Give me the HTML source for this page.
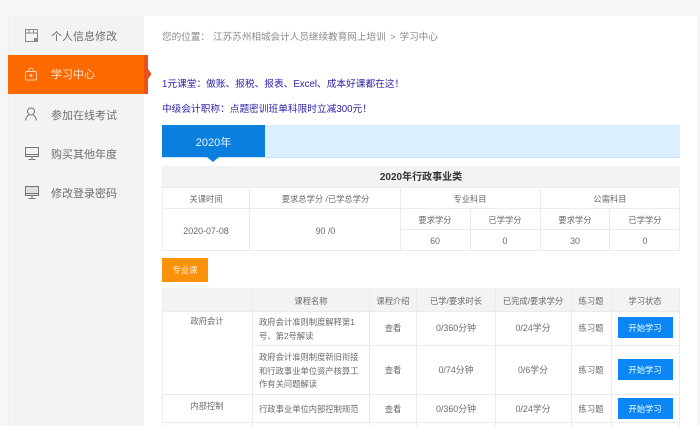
<!DOCTYPE html>
<html lang="zh"><head><meta charset="utf-8"><style>
html,body{margin:0;padding:0}
body{width:700px;height:426px;overflow:hidden;position:relative;background:#f6f6f6;font-family:"Liberation Sans","Noto Sans CJK SC",sans-serif;color:#666}
#w{left:0;top:0;width:700px;height:426px;overflow:hidden;filter:blur(.3px)}
div,svg{position:absolute}
.t{white-space:nowrap;font-size:8.3px;line-height:14px;color:#6a6a6a;text-align:center;transform:translateX(-50%)}
.n{font-size:8.9px}
.l{white-space:nowrap;line-height:14px;color:#666}
.m{font-size:11px;left:51px;color:#6e6e6e}
.hl{background:#ececec}
.btn{left:617.5px;width:55px;height:21px;background:#0a86f5;color:#fff;font-size:8.3px;line-height:22px;text-align:center}
</style></head><body><div id="w">
<div style="left:8px;top:16px;width:136px;height:410px;background:#f3f3f3;border-left:1px solid #eeeeee;box-sizing:border-box"></div>
<div style="left:144px;top:16px;width:553px;height:410px;background:#fff"></div>

<div style="left:8px;top:55px;width:136px;height:39px;background:#ff6a00"></div>
<div style="left:144px;top:55px;width:4px;height:39px;background:#e8501c"></div>
<svg style="left:148px;top:69px" width="4" height="10"><path d="M0 0L3.500 5L0 10Z" fill="#e8501c"/></svg>

<svg style="left:24px;top:27px" width="16" height="16" fill="none" stroke="#8a8a8a"><rect x="1.500" y="2.500" width="12" height="12"/><path d="M1.500 6h12M5 2.500v3.500M9.500 2.500v3.500"/><rect x="10.500" y="11.500" width="2" height="2" fill="#8a8a8a"/></svg>
<svg style="left:24px;top:66px" width="16" height="16" fill="none" stroke="#ffd0a8"><rect x="1.500" y="5.500" width="11" height="8.500" rx="1"/><path d="M4.500 5.500C4.500 1 9.500 1 9.500 5.500"/><circle cx="7" cy="9.500" r="1" fill="#ffd0a8"/></svg>
<svg style="left:24px;top:107px" width="16" height="16" fill="none" stroke="#777"><circle cx="7" cy="4.500" r="3.500"/><path d="M1.500 13.500C2 10.500 3.500 8.500 5 8M12.500 13.500C12 10.500 10.500 8.500 9 8"/></svg>
<svg style="left:24px;top:146px" width="16" height="16" fill="none" stroke="#777"><rect x="1.500" y="1.500" width="13" height="9"/><path d="M1.500 8.500h13M8 10.500v3M4.500 13.500h7"/></svg>
<svg style="left:24px;top:185px" width="16" height="16" fill="none" stroke="#777"><rect x="1.500" y="1.500" width="13" height="9" fill="#ddd"/><path d="M1.500 8.500h13M8 10.500v3M4.500 13.500h7"/></svg>

<div class="l m" style="top:30px">个人信息修改</div>
<div class="l m" style="top:68px;color:#ffe6cf">学习中心</div>
<div class="l m" style="top:109px">参加在线考试</div>
<div class="l m" style="top:148px">购买其他年度</div>
<div class="l m" style="top:187px">修改登录密码</div>

<div class="l" style="left:162px;top:31px;font-size:9.600px;color:#8a8a8a">您的位置：</div>
<div class="l" style="left:213px;top:31px;font-size:9.600px;color:#8a8a8a">江苏苏州相城会计人员继续教育网上培训</div>
<div class="l" style="left:390px;top:31px;font-size:9.600px;color:#8a8a8a">&gt;</div>
<div class="l" style="left:399.500px;top:31px;font-size:9.600px;color:#8a8a8a">学习中心</div>
<div class="l" style="left:162px;top:77.500px;font-size:9.700px;color:#2b1fa8">1元课堂：做账、报税、报表、Excel、成本好课都在这！</div>
<div class="l" style="left:162px;top:102.500px;font-size:9.700px;color:#2b1fa8">中级会计职称：点题密训班单科限时立减300元！</div>

<div style="left:162px;top:125px;width:518px;height:33px;background:#dcefff;border-bottom:1px solid #c8e2f6;box-sizing:border-box"></div>
<div style="left:162px;top:125px;width:103px;height:32px;background:#0a7fde;color:#e8f4ff;font-size:11px;line-height:37px;text-align:center">2020年</div>
<svg style="left:207px;top:157px" width="12" height="6"><path d="M0 0H12L6 5Z" fill="#0a7fde"/></svg>

<div style="left:162px;top:166px;width:518px;height:21px;background:#f3f3f3"></div>
<div class="t" style="left:421px;top:170.500px;font-size:10px;font-weight:bold;color:#333">2020年行政事业类</div>
<div class="hl" style="left:162px;top:187px;width:518px;height:1px"></div>
<div class="hl" style="left:162px;top:208px;width:518px;height:1px"></div>
<div class="hl" style="left:400px;top:229px;width:280px;height:1px"></div>
<div class="hl" style="left:162px;top:250px;width:518px;height:1px"></div>
<div class="hl" style="left:162px;top:187px;width:1px;height:64px"></div>
<div class="hl" style="left:249px;top:187px;width:1px;height:64px"></div>
<div class="hl" style="left:400px;top:187px;width:1px;height:64px"></div>
<div class="hl" style="left:540px;top:187px;width:1px;height:64px"></div>
<div class="hl" style="left:679px;top:187px;width:1px;height:64px"></div>
<div class="hl" style="left:470px;top:208px;width:1px;height:43px"></div>
<div class="hl" style="left:609px;top:208px;width:1px;height:43px"></div>
<div class="t" style="left:206px;top:192px">关课时间</div>
<div class="t" style="left:325.500px;top:192px">要求总学分 /已学总学分</div>
<div class="t" style="left:470px;top:192px">专业科目</div>
<div class="t" style="left:610px;top:192px">公需科目</div>
<div class="t n" style="left:206px;top:223.500px">2020-07-08</div>
<div class="t n" style="left:325.500px;top:223.500px">90 /0</div>
<div class="t" style="left:435px;top:212.500px">要求学分</div>
<div class="t" style="left:505px;top:212.500px">已学学分</div>
<div class="t" style="left:575px;top:212.500px">要求学分</div>
<div class="t" style="left:645px;top:212.500px">已学学分</div>
<div class="t n" style="left:435px;top:234px">60</div>
<div class="t n" style="left:505px;top:234px">0</div>
<div class="t n" style="left:575px;top:234px">30</div>
<div class="t n" style="left:645px;top:234px">0</div>

<div style="left:162px;top:258px;width:46px;height:24px;background:#fb9209;color:#fff2dd;font-size:8.300px;line-height:25px;text-align:center">专业课</div>

<div style="left:162px;top:288px;width:518px;height:23px;background:#f3f3f3"></div>
<div class="hl" style="left:162px;top:311px;width:518px;height:1px"></div>
<div class="hl" style="left:252px;top:345px;width:428px;height:1px"></div>
<div class="hl" style="left:162px;top:394px;width:518px;height:1px"></div>
<div class="hl" style="left:162px;top:422px;width:518px;height:1px"></div>
<div class="hl" style="left:162px;top:288px;width:1px;height:138px"></div>
<div class="hl" style="left:252px;top:288px;width:1px;height:138px"></div>
<div class="hl" style="left:369px;top:288px;width:1px;height:138px"></div>
<div class="hl" style="left:416px;top:288px;width:1px;height:138px"></div>
<div class="hl" style="left:495px;top:288px;width:1px;height:138px"></div>
<div class="hl" style="left:571px;top:288px;width:1px;height:138px"></div>
<div class="hl" style="left:611px;top:288px;width:1px;height:138px"></div>
<div class="hl" style="left:679px;top:288px;width:1px;height:138px"></div>

<div class="t" style="left:311px;top:293.500px">课程名称</div>
<div class="t" style="left:393px;top:293.500px">课程介绍</div>
<div class="t" style="left:456px;top:293.500px">已学/要求时长</div>
<div class="t" style="left:533px;top:293.500px">已完成/要求学分</div>
<div class="t" style="left:591px;top:293.500px">练习题</div>
<div class="t" style="left:645px;top:293.500px">学习状态</div>

<div class="t" style="left:207px;top:314px">政府会计</div>
<div class="t" style="left:207px;top:398.500px">内部控制</div>

<div class="l" style="left:259px;top:314.500px;font-size:8.300px;line-height:14.500px;color:#6a6a6a">政府会计准则制度解释第1<br>号、第2号解读</div>
<div class="l" style="left:259px;top:351px;font-size:8.300px;line-height:13.700px;color:#6a6a6a">政府会计准则制度新旧衔接<br>和行政事业单位资产核算工<br>作有关问题解读</div>
<div class="l" style="left:259px;top:402px;font-size:8.300px;color:#6a6a6a">行政事业单位内部控制规范</div>

<div class="t" style="left:393px;top:320.500px">查看</div>
<div class="t" style="left:393px;top:363px">查看</div>
<div class="t" style="left:393px;top:401.500px">查看</div>
<div class="t n" style="left:456px;top:320.500px">0/360分钟</div>
<div class="t n" style="left:456px;top:363px">0/74分钟</div>
<div class="t n" style="left:456px;top:401.500px">0/360分钟</div>
<div class="t n" style="left:533px;top:320.500px">0/24学分</div>
<div class="t n" style="left:533px;top:363px">0/6学分</div>
<div class="t n" style="left:533px;top:401.500px">0/24学分</div>
<div class="t" style="left:591px;top:320.500px">练习题</div>
<div class="t" style="left:591px;top:363px">练习题</div>
<div class="t" style="left:591px;top:401.500px">练习题</div>
<div class="btn" style="top:317px">开始学习</div>
<div class="btn" style="top:359px">开始学习</div>
<div class="btn" style="top:398px">开始学习</div>
</div></body></html>
